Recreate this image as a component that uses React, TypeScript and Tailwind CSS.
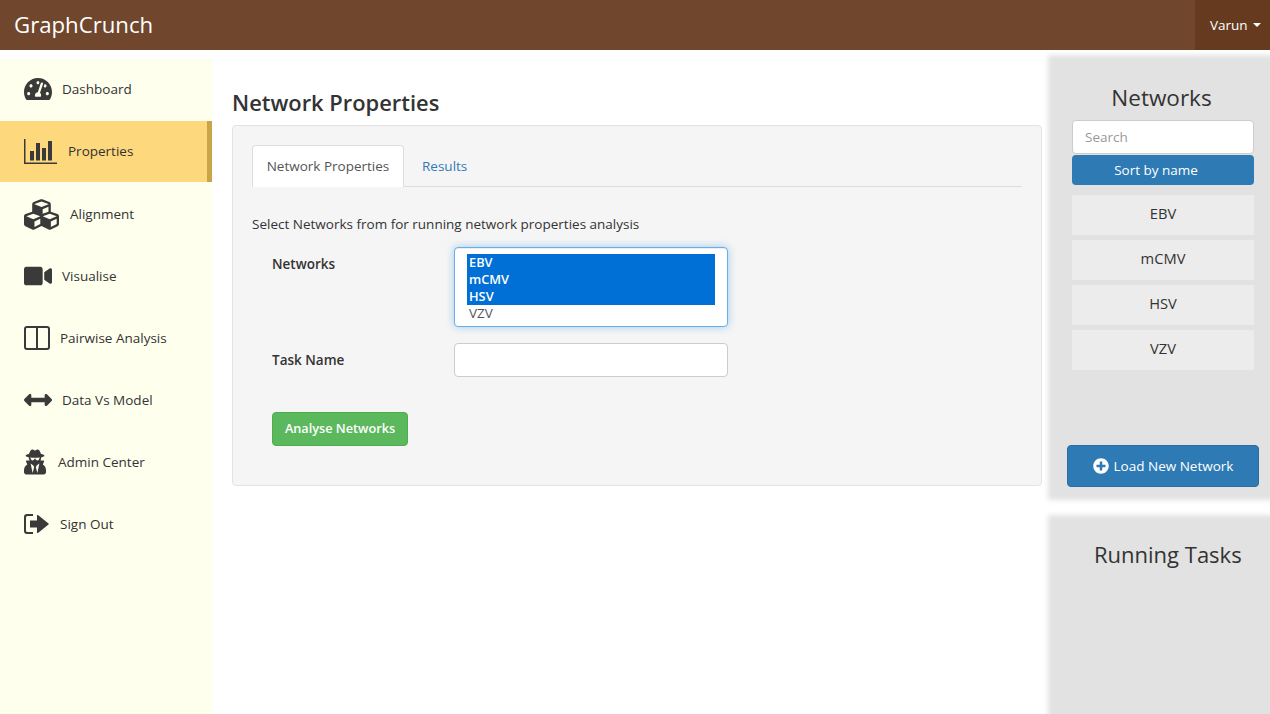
import { FaCubes, FaVideo, FaArrowsAltH, FaUserSecret, FaPlusCircle, FaTachometerAlt } from 'react-icons/fa'
import type { ReactNode } from 'react'

// 棒グラフのアイコン (線付き)
function BarsIcon() {
  return (
    <svg width="34" height="26" viewBox="0 0 34 26" fill="#3a3a3a">
      <path d="M0 0h1.5v23.5H33V25H0z" />
      <rect x="6" y="12" width="4" height="9.5" />
      <rect x="12" y="4" width="4" height="17.5" />
      <rect x="18" y="9" width="4" height="12.5" />
      <rect x="24" y="2" width="4" height="19.5" />
    </svg>
  )
}

function ColumnsIcon() {
  return (
    <svg width="26" height="24" viewBox="0 0 26 24" fill="none" stroke="#3a3a3a" strokeWidth="2">
      <rect x="1" y="1" width="24" height="22" rx="2" />
      <path d="M13 1v22" />
    </svg>
  )
}

function SignOutIcon() {
  return (
    <svg width="25" height="20" viewBox="0 0 25 20" fill="#3a3a3a">
      <path d="M3 0h6v2H3.500A1.500 1.500 0 0 0 2 3.500v13A1.500 1.500 0 0 0 3.500 18H9v2H3a3 3 0 0 1-3-3V3a3 3 0 0 1 3-3z" />
      <path d="M6 6.500h7V1.500a.6.6 0 0 1 1-.4l10.500 8.400a.6.6 0 0 1 0 1L14 18.900a.6.6 0 0 1-1-.4v-5H6z" />
    </svg>
  )
}

type NavItem = { label: string; icon: ReactNode; gap: string; active?: boolean }

const NAV_ITEMS: NavItem[] = [
  { label: 'Dashboard', icon: <FaTachometerAlt size={28} color="#3a3a3a" />, gap: 'gap-[10px] pb-[2px]' },
  { label: 'Properties', icon: <BarsIcon />, gap: 'gap-[10px]', active: true },
  { label: 'Alignment', icon: <FaCubes size={35} color="#3a3a3a" />, gap: 'gap-[11px]' },
  { label: 'Visualise', icon: <FaVideo size={28} color="#3a3a3a" />, gap: 'gap-[10px]' },
  { label: 'Pairwise Analysis', icon: <ColumnsIcon />, gap: 'gap-[10px]' },
  { label: 'Data Vs Model', icon: <FaArrowsAltH size={28} color="#3a3a3a" />, gap: 'gap-[10px]' },
  { label: 'Admin Center', icon: <FaUserSecret color="#3a3a3a" className="h-[26px] w-[22px]" />, gap: 'gap-[12px]' },
  { label: 'Sign Out', icon: <SignOutIcon />, gap: 'gap-[11px]' },
]

const NETWORKS = ['EBV', 'mCMV', 'HSV', 'VZV']

export default function App() {
  return (
    <div className="h-[714px] overflow-hidden bg-white font-['Open_Sans',sans-serif] text-[13.5px] text-[#333]">
      {/* ヘッダー */}
      <header className="relative z-10 flex h-[50px] items-center justify-between bg-[#70462c] text-white">
        <span className="pl-[14px] text-[22.2px]">GraphCrunch</span>
        <div className="flex h-full w-[75px] items-center gap-[5px] bg-[#663a1f] pl-[15px]">
          Varun
          <span className="border-x-[4px] border-t-[4px] border-x-transparent border-t-white" />
        </div>
      </header>

      <div className="flex h-[664px]">
        {/* サイドバー */}
        <nav className="mt-[9px] w-[212px] shrink-0 bg-[#ffffee]">
          {NAV_ITEMS.map((item) => (
            <div
              key={item.label}
              className={
                item.active
                  ? `mb-[1px] flex h-[61px] items-center border-r-[5px] border-[#c9a54a] bg-[#fdd87d] pl-[24px] ${item.gap}`
                  : `flex h-[62px] items-center pl-[24px] ${item.gap}`
              }
            >
              {item.icon}
              <span>{item.label}</span>
            </div>
          ))}
        </nav>

        {/* メイン */}
        <main className="ml-[20px] w-[810px] shrink-0">
          <h1 className="mt-[36px] text-[21.9px] font-semibold leading-[33px] text-[#333]">Network Properties</h1>
          <section className="mt-[6px] h-[361px] rounded-[4px] border border-[#e3e3e3] bg-[#f5f5f5] px-[19px] pt-[19px]">
            <div className="flex h-[42px] border-b border-[#ddd]">
              <div className="flex h-[42px] w-[152px] items-center justify-center rounded-t-[4px] border border-b-0 border-[#ddd] bg-white text-[#555]">
                Network Properties
              </div>
              <div className="flex h-[41px] items-center px-[18px] pt-[1px] text-[#337ab7]">Results</div>
            </div>
            <p className="mt-[27px] leading-[20px]">Select Networks from for running network properties analysis</p>

            <div className="ml-[20px] mt-[13px] flex">
              <label className="mt-[7px] w-[182px] font-semibold leading-[20px]">Networks</label>
              <div className="h-[80px] w-[274px] rounded-[4px] border border-[#66afe9] bg-white px-[12px] py-[6px] leading-[17px] shadow-[inset_0_1px_1px_rgba(0,0,0,0.075),0_0_8px_rgba(102,175,233,0.6)]">
                {NETWORKS.map((n, i) => (
                  <div key={n} className={i < 3 ? 'bg-[#006fd6] pl-[2px] text-[12.8px] font-semibold text-white' : 'pl-[2px] text-[#555]'}>
                    {n}
                  </div>
                ))}
              </div>
            </div>

            <div className="ml-[20px] mt-[16px] flex items-center">
              <label className="w-[182px] font-semibold leading-[20px]">Task Name</label>
              <input className="h-[34px] w-[274px] rounded-[4px] border border-[#ccc] bg-white" />
            </div>

            <button className="ml-[20px] mt-[35px] h-[34px] w-[136px] rounded-[4px] border border-[#4cae4c] bg-[#5cb85c] text-[12.7px] font-semibold text-white">
              Analyse Networks
            </button>
          </section>
        </main>

        {/* 右カラム */}
        <aside className="ml-[11px] flex w-[217px] shrink-0 flex-col">
          <div className="mt-[10px] h-[435px] bg-[#e2e2e2] px-[19px] shadow-[0_0_5px_5px_#e2e2e2]">
            <h2 className="pt-[21px] text-center text-[22.5px] leading-[33px]">Networks</h2>
            <input
              placeholder="Search"
              className="mt-[6px] block h-[34px] w-[182px] rounded-[4px] border border-[#ccc] bg-white px-[12px] placeholder:text-[#999]"
            />
            <button className="mt-[1px] block h-[30px] w-[182px] rounded-[4px] bg-[#2d7ab5] pr-[14px] text-center text-white">Sort by name</button>
            <ul className="mt-[10px] space-y-[5px]">
              {NETWORKS.map((n) => (
                <li key={n} className="flex h-[40px] w-[182px] items-center justify-center bg-[#ececec] pb-[3px] text-[14.7px]">
                  {n}
                </li>
              ))}
            </ul>
            <button className="ml-[-5px] mt-[75px] flex h-[42px] w-[192px] items-center justify-center gap-[5px] rounded-[4px] border border-[#2e6da4] bg-[#2d7ab5] text-white">
              <FaPlusCircle size={16} />
              Load New Network
            </button>
          </div>
          <div className="mt-[25px] flex-1 bg-[#e2e2e2] shadow-[0_0_5px_5px_#e2e2e2]">
            <h2 className="pl-[41px] pt-[18px] text-[22px] leading-[33px]">Running Tasks</h2>
          </div>
        </aside>
      </div>
    </div>
  )
}
